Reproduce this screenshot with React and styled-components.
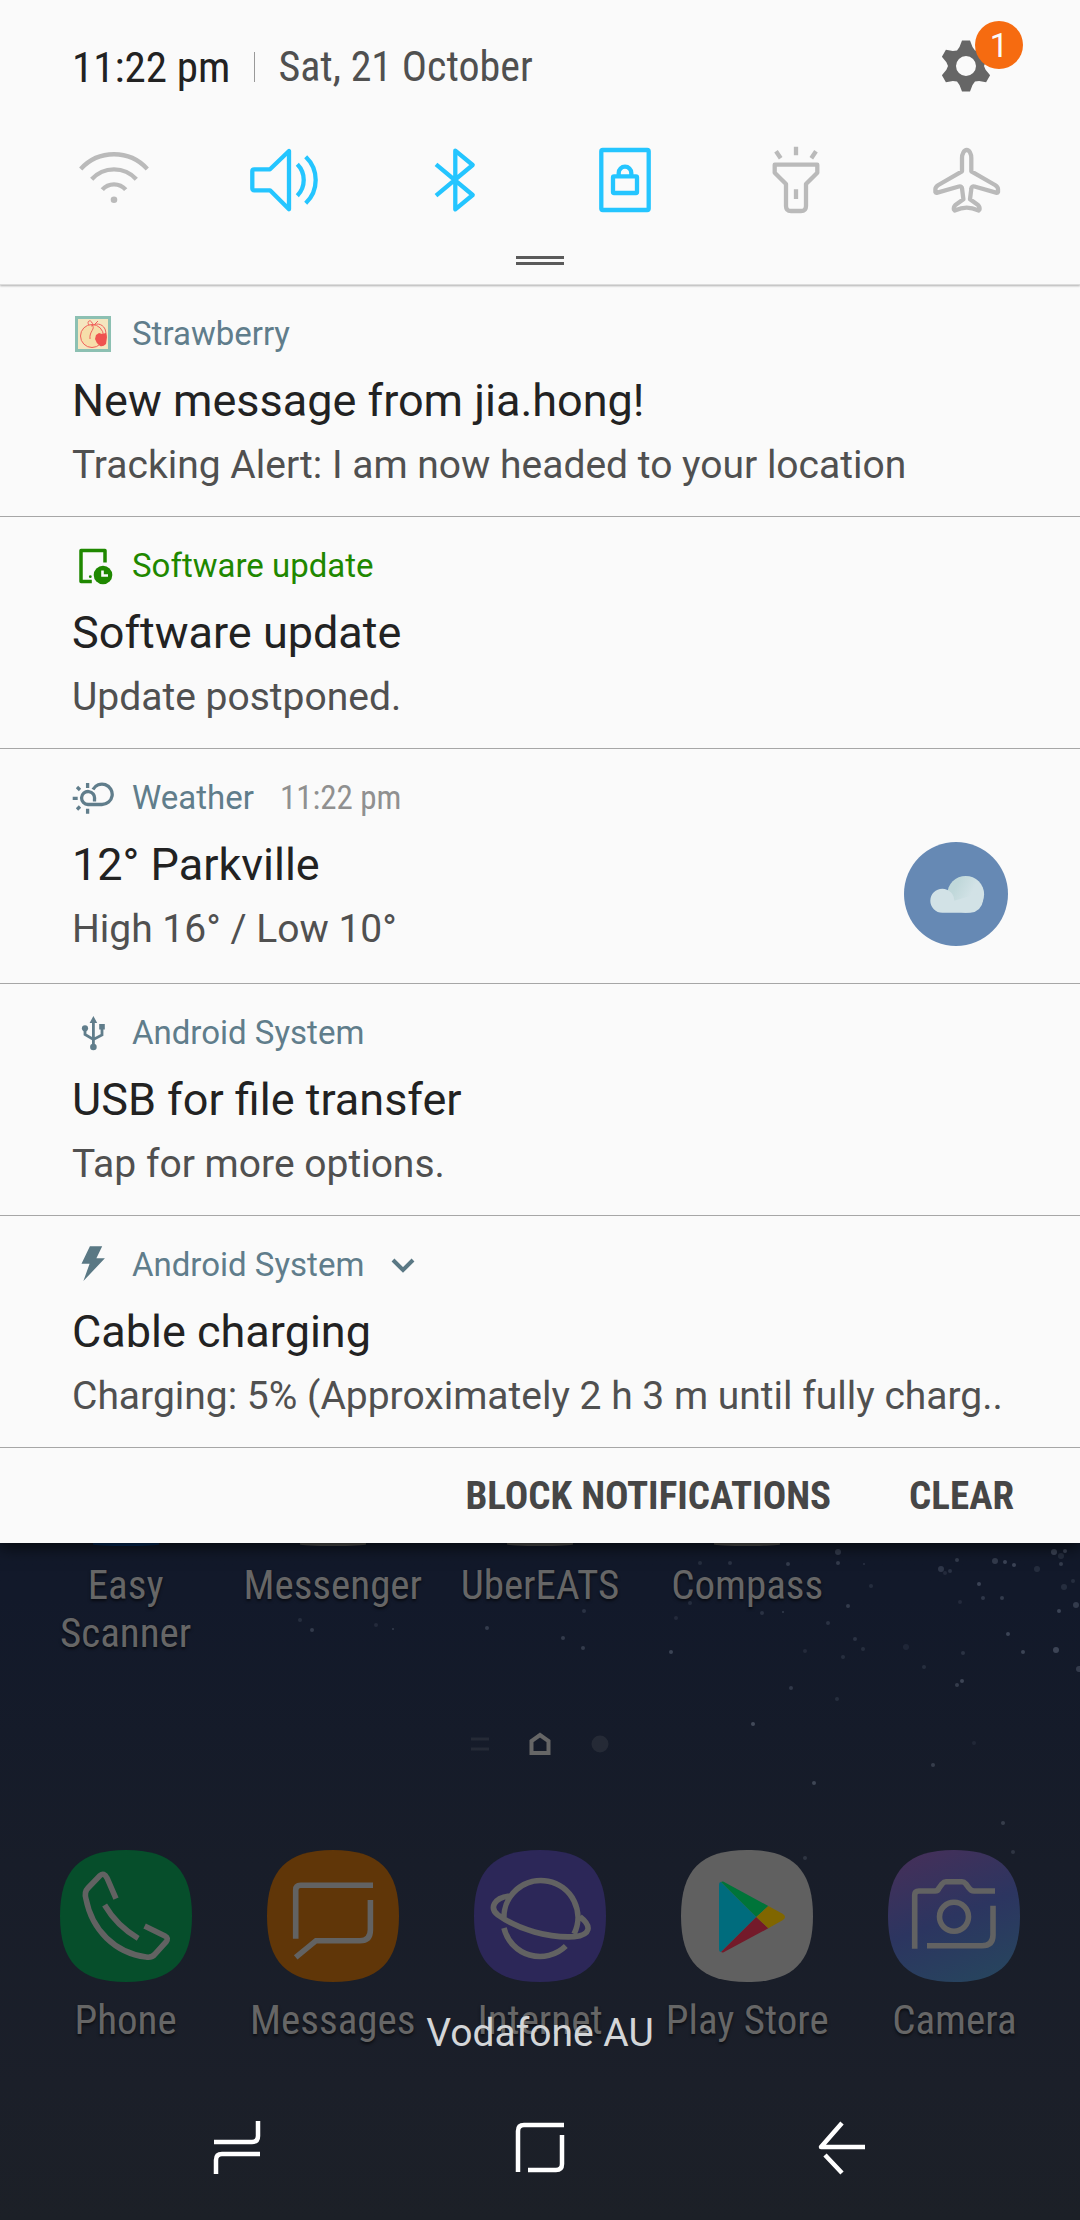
import React from "react";
import styled, { createGlobalStyle } from "styled-components";

const condensed = `"Roboto Condensed", "Liberation Sans Narrow", Roboto, sans-serif`;

const GlobalStyle = createGlobalStyle`
  *, *::before, *::after { box-sizing: border-box; }
  html { background: #1b1f27; }
  body { margin: 0; font-family: Roboto, sans-serif; }
  h2, p, ul { margin: 0; padding: 0; font-weight: 400; }
  ul { list-style: none; }
  button { margin: 0; padding: 0; border: 0; background: none; font: inherit; color: inherit; }
  svg { display: block; }
`;

const Screen = styled.div`
  min-height: 100vh;
  display: flex;
  flex-direction: column;
  overflow: hidden;
  background: linear-gradient(#10182a 0, #12192a 72%, #181d29 84%, #1b1f29 94%, #1c2027 100%);
`;

const Shade = styled.section`
  position: relative;
  z-index: 1;
  background: #fafafa;
  box-shadow: 0 4px 16px rgba(0, 0, 0, 0.7);
`;

const QuickPanel = styled.header`
  height: 285px;
  display: flex;
  flex-direction: column;
  border-bottom: 1px solid #dcdcdc;
  box-shadow: 0 1px 2px rgba(0, 0, 0, 0.3);
`;

const StatusRow = styled.div`
  display: flex;
  align-items: center;
  height: 134px;
  padding: 0 78px 0 72px;
  font-family: ${condensed};
  font-size: 42px;
  line-height: 48px;
  color: #222;
`;

const Clock = styled.span`
  font-size: 43px;
`;

const DateText = styled.span`
  margin-left: 24px;
  padding-left: 24px;
  color: #505050;
  background: linear-gradient(#999, #999) 0 50% / 1px 30px no-repeat;
`;

const SettingsButton = styled.button`
  position: relative;
  margin-left: auto;
  width: 72px;
  height: 72px;
`;

const Badge = styled.span`
  position: absolute;
  top: -10px;
  right: -21px;
  width: 48px;
  height: 48px;
  border-radius: 50%;
  background: #f66b10;
  color: #fafafa;
  font-family: Roboto, sans-serif;
  font-size: 33px;
  line-height: 50px;
  text-align: center;
`;

const Toggles = styled.div`
  display: flex;
  justify-content: space-between;
  padding: 10px 78px 0;
`;

const Toggle = styled.button`
  width: 72px;
  height: 72px;
  color: ${(p) => (p.$on ? "#24c5ff" : "#bababa")};
  svg { fill: none; stroke: currentColor; stroke-width: 4.3; }
`;

const Handle = styled.button`
  align-self: center;
  width: 48px;
  height: 9px;
  margin-top: 40px;
  border-top: 3px solid #5a5a5a;
  border-bottom: 3px solid #5a5a5a;
`;

const Notification = styled.li`
  padding: 28px 72px 19px;
  border-bottom: 1px solid #a6a6a6;
`;

const NotificationHeader = styled.div`
  display: flex;
  align-items: center;
  height: 42px;
  font-size: 33px;
  line-height: 42px;
  color: ${(p) => p.$color};
`;

const AppName = styled.span`
  margin-left: 18px;
`;

const Time = styled.span`
  margin-left: 26px;
  color: #909090;
  font-family: ${condensed};
`;

const Expand = styled.button`
  margin-left: 26px;
`;

const NotificationBody = styled.div`
  display: flex;
  align-items: flex-start;
  margin-top: 14px;
`;

const Copy = styled.div`
  flex: 1;
  min-width: 0;
  line-height: 64px;
  white-space: nowrap;
`;

const Title = styled.h2`
  font-size: 45px;
  color: #222;
`;

const Detail = styled.p`
  font-size: 39px;
  color: #505050;
`;

const LargeIcon = styled.div`
  margin: 9px 0 18px;
`;

const Actions = styled.div`
  display: flex;
  justify-content: flex-end;
  gap: 78px;
  height: 95px;
  padding-right: 66px;
`;

const ActionButton = styled.button`
  font-family: ${condensed};
  font-size: 39px;
  font-weight: 700;
  color: #464646;
`;

const Home = styled.main`
  position: relative;
  flex: 1;
  display: flex;
  flex-direction: column;
  color: #666;
  font-family: ${condensed};
  font-size: 41px;
  line-height: 48px;
`;

const StarField = styled.svg`
  position: absolute;
  inset: 0;
  width: 100%;
  height: auto;
`;

const AppGrid = styled.ul`
  display: grid;
  grid-template-columns: repeat(5, 1fr);
  padding: 0 22px;
  text-align: center;
  text-shadow: 0 2px 3px rgba(0, 0, 0, 0.6);
`;

const AppItem = styled.li`
  position: relative;
  display: flex;
  flex-direction: column;
  align-items: center;
`;

const IconEdge = styled.span`
  width: 66px;
  height: 3px;
  margin-bottom: 15px;
  border-radius: 0 0 50% 50%;
  background: ${(p) => p.$color};
`;

const AppLabel = styled.span`
  width: 100%;
  padding: 0 20px;
  ${(p) => p.$wide && "padding: 0; white-space: nowrap;"}
`;

const Pages = styled.div`
  position: relative;
  display: flex;
  justify-content: center;
  margin: 75px 0 94px;
`;

const Dock = styled(AppGrid)`
  svg { margin-bottom: 14px; }
`;

const Carrier = styled.p`
  position: absolute;
  top: 466px;
  left: 0;
  right: 0;
  z-index: 1;
  text-align: center;
  font-family: Roboto, sans-serif;
  font-size: 39px;
  line-height: 48px;
  color: #d4d6d8;
`;

const NavBar = styled.nav`
  display: flex;
  justify-content: center;
  gap: 230px;
  margin-top: 67px;
  padding-bottom: 37px;
  button { width: 72px; height: 72px; }
  svg { fill: none; stroke: #fff; stroke-width: 4.5; }
`;

const box = (n) => ({ width: n, height: n, viewBox: `0 0 ${n} ${n}`, "aria-hidden": true });

const gearPath = () => {
  let d = "";
  for (let i = 0; i < 6; i++) {
    [[-30, 18], [-19, 20], [-9, 25.8], [9, 25.8], [19, 20]].forEach(([a, r], k) => {
      const t = ((i * 60 + a - 90) * Math.PI) / 180;
      d += `${i + k === 0 ? "M" : "L"}${(36 + r * Math.cos(t)).toFixed(1)} ${(35 + r * Math.sin(t)).toFixed(1)}`;
    });
  }
  return d + "ZM46 35a10 10 0 1 0-20 0a10 10 0 1 0 20 0Z";
};

const Gear = () => (
  <svg {...box(72)}>
    <path d={gearPath()} fill="#666" fillRule="evenodd" />
  </svg>
);

const toggles = [
  { name: "Wi-Fi", art: <><path d="M2.7 25A45 45 0 0 1 69.3 25M13.7 35.3A30 30 0 0 1 58.3 35.3M24.3 45.7A15.4 15.4 0 0 1 47.7 45.7" /><circle cx="36" cy="55.7" r="3.3" fill="currentColor" stroke="none" /></> },
  { name: "Sound", on: true, art: <path strokeLinejoin="round" d="M41 7V65.3L22 46.3H6.3Q4.3 46.3 4.3 44.3V27.3Q4.3 25.3 6.3 25.3H22ZM49.3 20.3A22.4 22.4 0 0 1 49.3 51.7M57.7 12.7A32.2 32.2 0 0 1 57.7 59.3" /> },
  { name: "Bluetooth", on: true, art: <path strokeLinejoin="round" d="M17 20.3L53.7 51L36.3 65.3V6.7L53.7 21L17 51.7" /> },
  { name: "Portrait", on: true, art: <><rect x="12.3" y="6" width="47.4" height="60" rx="1.5" /><rect x="24" y="32.3" width="24" height="16.7" rx="1" /><path d="M29.7 32V29A6.3 6.3 0 0 1 42.3 29V32" /></> },
  { name: "Torch", art: <><path strokeLinejoin="round" d="M14.7 20.7H57.3V28.7L46 40V62Q46 67 41 67H31Q26 67 26 62V40L14.7 28.7Z" /><path d="M36 2.7V11.3M16 7.3L20.7 14.3M56 7.3L51.3 14.3M36 45.3V55" /></> },
  { name: "Aeroplane mode", art: <path strokeLinejoin="round" d="M32 27.3V14C32 10 34 6 36.7 6S41.3 10 41.3 14V27.3L65 41Q68 43 68 45V48Q67.500 49 66 48.600L44.500 42.500Q41.300 42 41.300 45L40 55.300L48 61Q50 63 49.500 65.500L48.700 66.500Q42 63.700 36.700 63.700T24.700 66.500L23.900 65.500Q23.400 63 25.400 61L33.400 55.300L32.100 45Q32.100 42 28.900 42.500L7.400 48.600Q5.900 49 5.400 48V45Q5.400 43 8.400 41Z" /> },
];

const StrawberryIcon = () => (
  <svg {...box(42)} fill="none">
    <path d="M3 3h36v36H3z" fill="#8cc0b2" />
    <path d="M6 6h30v30H6z" fill="#f5e6bf" />
    <circle cx="20" cy="23" r="11.500" fill="#f6deaa" stroke="#f0605c" />
    <path d="M20 12c4 4-3 6-2 14M20 13c3-3 10-3 13 3 1 3 1 5 1 7M17 12c-3-4 2-6 3-2 2 1 0 3-1 3M22 12l4-4" stroke="#f0605c" />
    <path d="M24 22l3-2 3 1 4-1 1 4-1 7q-3 3-6 2-4-3-5-7z" fill="#ef5350" />
  </svg>
);

const UpdateIcon = () => (
  <svg {...box(42)} fill="none">
    <path d="M19.800 36.500H9V5.500H33V17.500" stroke="#1f8800" strokeWidth="3.500" strokeLinejoin="round" />
    <circle cx="18.300" cy="31.700" r="1.400" fill="#1f8800" />
    <circle cx="31" cy="30" r="9.300" fill="#1f8800" />
    <path d="M30.500 25.500V30.500H36" stroke="#fafafa" strokeWidth="2.600" />
  </svg>
);

const WeatherIcon = () => (
  <svg {...box(42)} fill="none" stroke="#607d8b" strokeWidth="3.300">
    <path d="M22.500 24.500V22A6.500 6.500 0 1 0 16 27.500H30A10.200 10.200 0 1 0 21 12.500M15.600 6V11M15.600 31.700V36.700M.7 21.300H5.700M5 10L8 13M5 32.500L8 29.500" />
  </svg>
);

const UsbIcon = () => (
  <svg {...box(42)} fill="#607d8b">
    <path d="M21.400 10V34M13 17V22.500L21.400 27.500L30 23V16" fill="none" stroke="#607d8b" strokeWidth="2.800" />
    <path d="M21.400 4L25.200 11H17.600ZM27.200 12h5.600v5.600h-5.600z" />
    <circle cx="21.400" cy="35" r="3.300" />
    <circle cx="13" cy="16.300" r="3.100" />
  </svg>
);

const BoltIcon = () => (
  <svg {...box(42)}>
    <path d="M17.900 2.300H30.200L24.400 14.300H32.900L11.400 37L17.600 19.700H9.500Z" fill="#5a7884" />
  </svg>
);

const CloudIcon = () => (
  <svg {...box(104)}>
    <defs>
      <linearGradient id="cloud" x1="0" y1="0.300" x2="0.600" y2="0.600">
        <stop offset="0.300" stopColor="#c0d8da" />
        <stop offset="1" stopColor="#d2e2e6" />
      </linearGradient>
    </defs>
    <circle cx="52" cy="52" r="52" fill="#6689b4" />
    <circle cx="61.700" cy="52.300" r="18.400" fill="url(#cloud)" />
    <path d="M38.300 46.700a12 12 0 0 1 12 12l23-7 6 6q-2 12-13 13h-28a12 12 0 0 1 0-24Z" fill="#d2e2e6" />
  </svg>
);

const slate = "#607d8b";

const notifications = [
  { app: "Strawberry", color: slate, Icon: StrawberryIcon, title: "New message from jia.hong!", detail: "Tracking Alert: I am now headed to your location" },
  { app: "Software update", color: "#1f8800", Icon: UpdateIcon, title: "Software update", detail: "Update postponed." },
  { app: "Weather", color: slate, Icon: WeatherIcon, time: "11:22 pm", title: "12° Parkville", detail: "High 16° / Low 10°", Large: CloudIcon },
  { app: "Android System", color: slate, Icon: UsbIcon, title: "USB for file transfer", detail: "Tap for more options." },
  { app: "Android System", color: slate, Icon: BoltIcon, expandable: true, title: "Cable charging", detail: "Charging: 5% (Approximately 2 h 3 m until fully charg.." },
];

const squircle = "M66 0C112 0 132 20 132 66S112 132 66 132S0 112 0 66S20 0 66 0Z";

const dockApps = [
  { name: "Phone", fill: "#064e2b", art: <path d="M56 48.700L47 28Q44 22 40 25.500L28 38Q24 42 26 49C32 80 55 103 86 107Q92 108 95 104L106 92Q109 88 105 86L84.600 76M44.600 55Q57 76 78.200 88.300" /> },
  { name: "Messages", fill: "#603608", art: <path d="M28.700 88.700V40Q28.700 35.300 33.500 35.300H106M103.400 50V80Q103.400 90.700 93 90.700H49L28.700 107.300" /> },
  { name: "Internet", fill: "#2c2758", art: <path d="M30 70A37 37 0 1 1 100 84M30 78A37 37 0 0 0 91.800 96M35 46C20 48 15 58 24 65C45 80 75 88 100 86.700C117 85 118 76 106 66.700" /> },
  { name: "Play Store", fill: "#606060", art: (
    <g stroke="none">
      <path d="M38 35V99Q38 102 40 102L75.300 67L40 32Q38 32 38 35Z" fill="#006c7d" />
      <path d="M40 32Q42 31 44 32.500L87.300 56L75.300 67Z" fill="#007439" />
      <path d="M40 102Q42 103 44 101.500L87.300 78.300L75.300 67Z" fill="#741a2a" />
      <path d="M87.300 56L102 64Q106 67 102 70L87.300 78.300L75.300 67Z" fill="#806600" />
    </g>
  ) },
  { name: "Camera", fill: "url(#camera)", art: <><path d="M26.700 98.700V45Q26.700 41 31 41H47Q50 41 51 38L54 34Q56 31.700 58 31.700H74Q76 31.700 78 34L81 38Q83 41 86 41H107M105 55.700V85Q105 95.700 94 95.700H39" /><circle cx="66" cy="66.700" r="14.500" /></> },
];

const gridApps = [
  { name: "Easy Scanner", edge: "#052c5c" },
  { name: "Messenger", edge: "#505050", wide: true },
  { name: "UberEATS", edge: "#505050", wide: true },
  { name: "Compass", edge: "#505050", wide: true },
];

/* x, y, radius, opacity */
const stars = [
  [838, 9, 3, 0.2], [838, 20, 2, 0.2], [700, 20, 2, 0.12], [730, 20, 2, 0.15], [788, 21, 2, 0.2], [864, 21, 1, 0.15],
  [957, 17, 2, 0.2], [995, 18, 3, 0.2], [1005, 19, 2, 0.25], [1014, 22, 2, 0.25], [1054, 9, 3, 0.25], [1065, 8, 2, 0.25],
  [1061, 13, 3, 0.12], [1061, 21, 2, 0.2], [1037, 26, 3, 0.12], [941, 26, 3, 0.18], [950, 28, 2, 0.15], [945, 30, 2, 0.1],
  [871, 43, 2, 0.12], [979, 41, 2, 0.25], [1002, 55, 2, 0.2], [983, 55, 2, 0.18], [960, 59, 2, 0.1], [1073, 38, 2, 0.12],
  [1064, 44, 3, 0.12], [1076, 62, 3, 0.2], [1059, 68, 2, 0.25], [848, 63, 2, 0.2], [690, 60, 2, 0.12], [584, 68, 2, 0.15],
  [762, 70, 2, 0.15], [783, 69, 1, 0.2], [676, 75, 2, 0.1], [828, 80, 2, 0.15], [300, 77, 2, 0.12], [312, 87, 2, 0.2],
  [376, 82, 2, 0.1], [393, 86, 1, 0.2], [487, 85, 2, 0.2], [563, 95, 2, 0.2], [583, 105, 2, 0.2], [671, 109, 2, 0.25],
  [1008, 91, 2, 0.25], [1056, 107, 3, 0.25], [1023, 109, 2, 0.25], [963, 110, 2, 0.15], [855, 96, 2, 0.15], [863, 106, 2, 0.12],
  [805, 108, 2, 0.1], [843, 114, 2, 0.12], [906, 104, 3, 0.08], [924, 124, 2, 0.12], [1079, 126, 3, 0.2], [962, 138, 2, 0.25],
  [957, 142, 2, 0.2], [791, 145, 2, 0.18], [837, 156, 2, 0.12], [753, 181, 2, 0.28], [974, 200, 2, 0.08], [933, 222, 2, 0.2],
  [814, 240, 2, 0.25], [1003, 280, 2, 0.2], [1013, 309, 2, 0.15], [805, 315, 2, 0.15],
];

export default function App() {
  return (
    <Screen>
      <GlobalStyle />
      <Shade>
        <QuickPanel>
          <StatusRow>
            <Clock>11:22 pm</Clock>
            <DateText>Sat, 21 October</DateText>
            <SettingsButton aria-label="Settings">
              <Gear />
              <Badge>1</Badge>
            </SettingsButton>
          </StatusRow>
          <Toggles>
            {toggles.map((t) => (
              <Toggle key={t.name} $on={t.on} aria-label={t.name} aria-pressed={!!t.on}>
                <svg {...box(72)}>{t.art}</svg>
              </Toggle>
            ))}
          </Toggles>
          <Handle aria-label="Expand quick settings" />
        </QuickPanel>
        <ul>
          {notifications.map(({ app, color, Icon, time, expandable, title, detail, Large }) => (
            <Notification key={title}>
              <NotificationHeader $color={color}>
                <Icon />
                <AppName>{app}</AppName>
                {time && <Time>{time}</Time>}
                {expandable && (
                  <Expand aria-label="Expand notification">
                    <svg width="26" height="20" viewBox="0 0 26 20">
                      <path d="M3 5L13 15L23 5" fill="none" stroke="#5a7884" strokeWidth="4" />
                    </svg>
                  </Expand>
                )}
              </NotificationHeader>
              <NotificationBody>
                <Copy>
                  <Title>{title}</Title>
                  <Detail>{detail}</Detail>
                </Copy>
                {Large && <LargeIcon><Large /></LargeIcon>}
              </NotificationBody>
            </Notification>
          ))}
        </ul>
        <Actions>
          <ActionButton>BLOCK NOTIFICATIONS</ActionButton>
          <ActionButton>CLEAR</ActionButton>
        </Actions>
      </Shade>
      <Home>
        <StarField viewBox="0 0 1080 340" aria-hidden="true">
          {stars.map(([x, y, r, o]) => (
            <circle key={`${x}-${y}`} cx={x} cy={y} r={r} fill="#b8c4d8" opacity={o} />
          ))}
        </StarField>
        <AppGrid>
          {gridApps.map((a) => (
            <AppItem key={a.name}>
              <IconEdge $color={a.edge} />
              <AppLabel $wide={a.wide}>{a.name}</AppLabel>
            </AppItem>
          ))}
        </AppGrid>
        <Pages>
          <svg width="140" height="24" viewBox="0 0 140 24" fill="none" aria-hidden="true">
            <path d="M1 7H19M1 17H19" stroke="#252a36" strokeWidth="3" />
            <path d="M61.500 21V9L70 3L78.500 9V21Z" stroke="#666" strokeWidth="4" />
            <circle cx="130" cy="12" r="8.500" fill="#252a36" />
          </svg>
        </Pages>
        <Dock>
          {dockApps.map((a) => (
            <AppItem key={a.name}>
              <svg {...box(132)}>
                <defs>
                  <linearGradient id="camera" x1="0.300" y1="0" x2="0.700" y2="1">
                    <stop offset="0" stopColor="#43305a" />
                    <stop offset="0.500" stopColor="#2c3560" />
                    <stop offset="1" stopColor="#27445e" />
                  </linearGradient>
                </defs>
                <path d={squircle} fill={a.fill} />
                <g fill="none" stroke="#626262" strokeWidth="5.600">{a.art}</g>
              </svg>
              <AppLabel $wide>{a.name}</AppLabel>
            </AppItem>
          ))}
        </Dock>
        <Carrier>Vodafone AU</Carrier>
        <NavBar aria-label="System navigation">
          <button aria-label="Recent apps">
            <svg {...box(72)}><path d="M12 31H50Q56 31 56 25V10M58 43H20Q14 43 14 49V63" /></svg>
          </button>
          <button aria-label="Home">
            <svg {...box(72)}><path d="M14 61V20Q14 14 20 14H60M58 24V53Q58 59 52 59H24" /></svg>
          </button>
          <button aria-label="Back">
            <svg {...box(72)}><path d="M59 36H15L36 12M19 44L36 62" strokeLinejoin="round" /></svg>
          </button>
        </NavBar>
      </Home>
    </Screen>
  );
}
